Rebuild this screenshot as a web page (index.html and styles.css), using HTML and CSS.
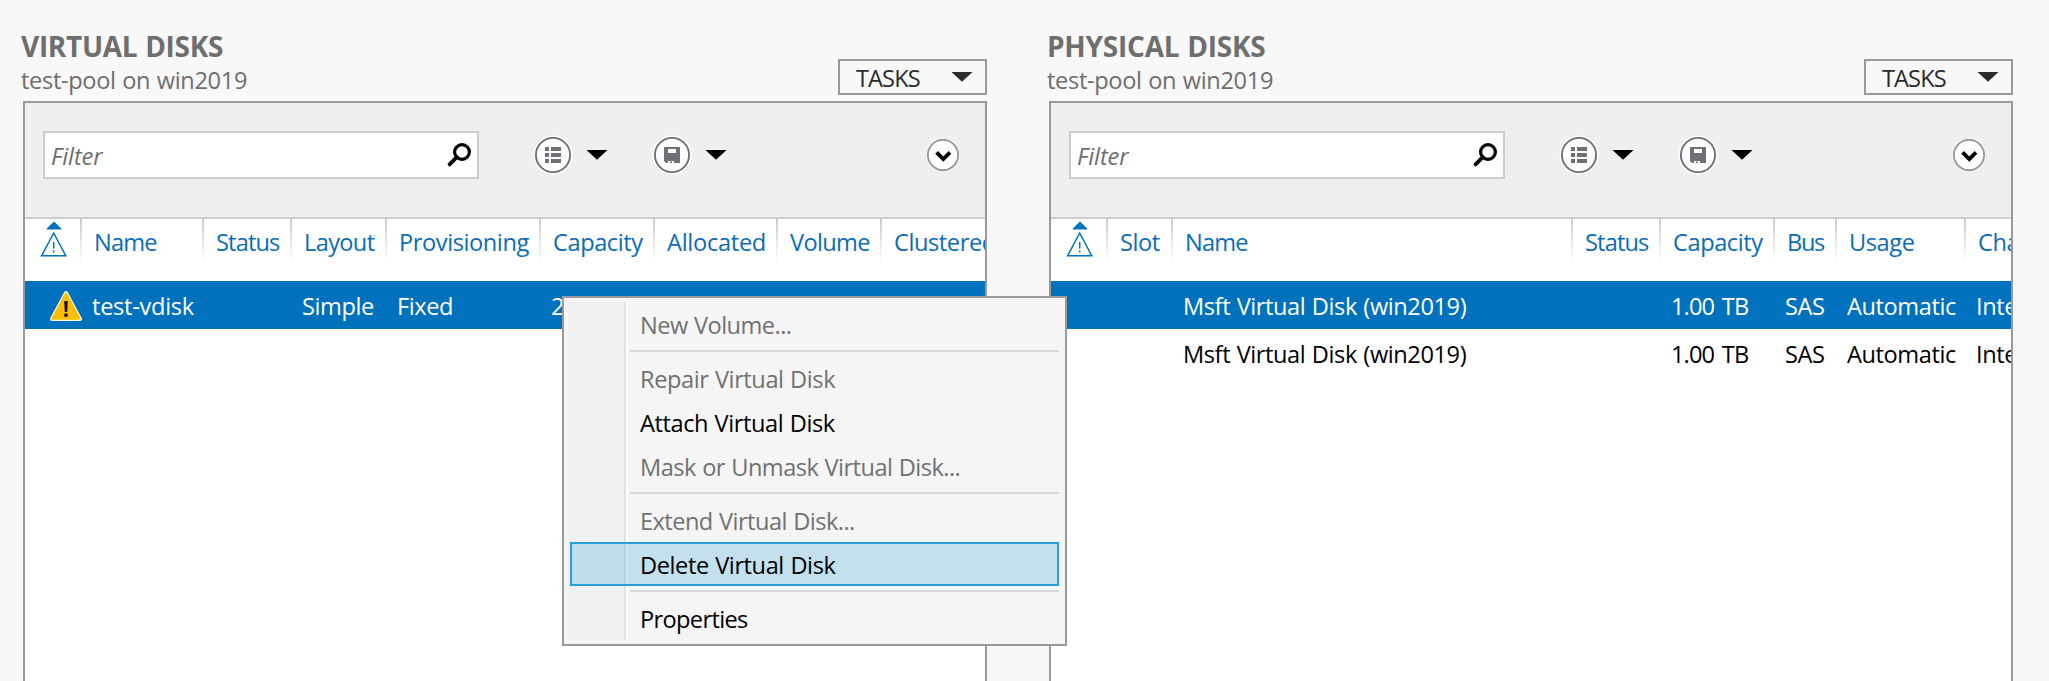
FILE: index.html
```html
<!DOCTYPE html>
<html lang="en">
<head>
<meta charset="utf-8">
<title>Storage Pools</title>
<link rel="stylesheet" href="styles.css">
</head>
<body>
<svg class="defs" width="0" height="0" aria-hidden="true">
  <symbol id="i-search" viewBox="0 0 26 26"><circle cx="16" cy="10" r="7.4" fill="none" stroke="#000" stroke-width="3.2"/><path d="M10.800 15.200 3.600 22.400" stroke="#000" stroke-width="3.800" stroke-linecap="round"/></symbol>
  <symbol id="i-list" viewBox="0 0 40 40"><circle cx="20" cy="20" r="19.500" fill="#fff"/><circle cx="20" cy="20" r="17.100" fill="#fff" stroke="#6d7176" stroke-width="1.900"/><path d="M12 12h4v4h-4zM18 12h10v4H18zM12 18h4v4h-4zM18 18h10v4H18zM12 24h4v4h-4zM18 24h10v4H18z" fill="#6d7176"/></symbol>
  <symbol id="i-save" viewBox="0 0 40 40"><circle cx="20" cy="20" r="19.500" fill="#fff"/><circle cx="20" cy="20" r="17.100" fill="#fff" stroke="#6d7176" stroke-width="1.900"/><path d="M12 12h16v16H14l-2-2z" fill="#6d7176"/><path d="M16 14h8v4h-8zM16 26h6v2h-6z" fill="#fff"/><path d="M18 26.500h2V28h-2z" fill="#6d7176"/></symbol>
  <symbol id="i-expand" viewBox="0 0 34 34"><circle cx="17" cy="17" r="15.100" fill="#fff" stroke="#959595" stroke-width="1.700"/><path d="M10.600 14.300 17.300 21 24 14.300" fill="none" stroke="#000" stroke-width="3.800"/></symbol>
  <symbol id="i-arrow" viewBox="0 0 22 10"><path d="M.5 0h21L11 9.800z" fill="currentColor"/></symbol>
  <symbol id="i-sort" viewBox="0 0 28 36"><path d="M14 .500 21.200 7.500V8.500H6.800V7.500z" fill="#0072be"/><path d="M13.700 12 25.800 34.800H1.600z" fill="none" stroke="#0072be" stroke-width="1.500"/><path d="M13.700 21v6.500M13.700 29.500v2" stroke="#0072be" stroke-width="1.500"/></symbol>
  <symbol id="i-warn" viewBox="0 0 32 30"><path d="M16 2 30 28H2z" fill="#ffbf00" stroke="#fff" stroke-width="3.800" stroke-linejoin="round"/><path d="M16 2.300 29.700 27.800H2.300z" fill="#ffbf00" stroke="#ffbf00" stroke-width="2" stroke-linejoin="round"/><path d="M14.200 10h3.600l-.6 11h-2.400z" fill="#111"/><circle cx="16" cy="24.200" r="1.900" fill="#111"/></symbol>
</svg>
<main class="page">
  <section class="tile">
    <header class="tile-head">
      <div>
        <h2 class="title title-virtual">VIRTUAL DISKS</h2>
        <p class="subtitle">test-pool on win2019</p>
      </div>
      <button class="tasks"><span>TASKS</span><svg class="arrow"><use href="#i-arrow"/></svg></button>
    </header>
    <div class="panel">
      <div class="toolbar">
        <div class="filter"><span>Filter</span><svg class="search"><use href="#i-search"/></svg></div>
        <svg class="round"><use href="#i-list"/></svg>
        <svg class="arrow"><use href="#i-arrow"/></svg>
        <svg class="round second"><use href="#i-save"/></svg>
        <svg class="arrow"><use href="#i-arrow"/></svg>
        <svg class="expand"><use href="#i-expand"/></svg>
      </div>
      <div class="grid virtual head">
        <div class="cell icon-cell"><svg class="sort"><use href="#i-sort"/></svg></div>
        <div class="cell tight">Name</div>
        <div class="cell tight">Status</div>
        <div class="cell mid">Layout</div>
        <div class="cell">Provisioning</div>
        <div class="cell">Capacity</div>
        <div class="cell loose">Allocated</div>
        <div class="cell mid">Volume</div>
        <div class="cell">Clustered</div>
      </div>
      <div class="grid virtual row selected">
        <div class="cell icon-cell"><svg class="warn"><use href="#i-warn"/></svg></div>
        <div class="cell loose">test-vdisk</div>
        <div class="cell"></div>
        <div class="cell">Simple</div>
        <div class="cell">Fixed</div>
        <div class="cell">20.0 GB</div>
        <div class="cell"></div>
        <div class="cell"></div>
        <div class="cell"></div>
      </div>
    </div>
  </section>
  <section class="tile">
    <header class="tile-head">
      <div>
        <h2 class="title">PHYSICAL DISKS</h2>
        <p class="subtitle">test-pool on win2019</p>
      </div>
      <button class="tasks"><span>TASKS</span><svg class="arrow"><use href="#i-arrow"/></svg></button>
    </header>
    <div class="panel">
      <div class="toolbar">
        <div class="filter"><span>Filter</span><svg class="search"><use href="#i-search"/></svg></div>
        <svg class="round"><use href="#i-list"/></svg>
        <svg class="arrow"><use href="#i-arrow"/></svg>
        <svg class="round second"><use href="#i-save"/></svg>
        <svg class="arrow"><use href="#i-arrow"/></svg>
        <svg class="expand"><use href="#i-expand"/></svg>
      </div>
      <div class="grid physical head">
        <div class="cell icon-cell"><svg class="sort"><use href="#i-sort"/></svg></div>
        <div class="cell">Slot</div>
        <div class="cell tight">Name</div>
        <div class="cell tight">Status</div>
        <div class="cell">Capacity</div>
        <div class="cell tighter">Bus</div>
        <div class="cell">Usage</div>
        <div class="cell">Chassis</div>
      </div>
      <div class="grid physical row selected">
        <div class="cell"></div>
        <div class="cell"></div>
        <div class="cell">Msft Virtual Disk (win2019)</div>
        <div class="cell"></div>
        <div class="cell size">1.00 TB</div>
        <div class="cell">SAS</div>
        <div class="cell">Automatic</div>
        <div class="cell">Integrated</div>
      </div>
      <div class="grid physical row">
        <div class="cell"></div>
        <div class="cell"></div>
        <div class="cell">Msft Virtual Disk (win2019)</div>
        <div class="cell"></div>
        <div class="cell size">1.00 TB</div>
        <div class="cell">SAS</div>
        <div class="cell">Automatic</div>
        <div class="cell">Integrated</div>
      </div>
    </div>
  </section>
</main>
<div class="menu">
  <div class="item disabled dots">New Volume...</div>
  <div class="rule"></div>
  <div class="item disabled">Repair Virtual Disk</div>
  <div class="item">Attach Virtual Disk</div>
  <div class="item disabled dots">Mask or Unmask Virtual Disk...</div>
  <div class="rule"></div>
  <div class="item disabled dots">Extend Virtual Disk...</div>
  <div class="item active">Delete Virtual Disk</div>
  <div class="rule"></div>
  <div class="item mid">Properties</div>
</div>
</body>
</html>
```
FILE: styles.css
```css
* { box-sizing: border-box; }

body {
  margin: 0;
  height: 681px;
  overflow: hidden;
  background: #f8f8f8;
  color: #000;
  font-family: "Open Sans", "Noto Sans", sans-serif;
  font-size: 23.6px;
  letter-spacing: -0.42px;
  word-spacing: 0.8px;
}

svg { display: block; flex: none; }
.defs { position: absolute; }
.tight { letter-spacing: -0.85px; }
.tighter { letter-spacing: -1.3px; }
.mid { letter-spacing: -0.65px; }
.loose { letter-spacing: -0.28px; }
.size { letter-spacing: -0.9px; word-spacing: 2.5px; }

.page {
  display: flex;
  gap: 62px;
  padding: 28px 0 0 23px;
  height: 681px;
}

.tile { display: flex; flex-direction: column; flex: none; width: 964px; }

.tile-head {
  display: flex;
  justify-content: space-between;
  align-items: flex-end;
  height: 73px;
  padding-bottom: 6px;
}
.tile-head > div { align-self: flex-start; margin-left: -2px; color: #6e6e6e; }

.title {
  margin: 0;
  font-size: 28px;
  font-weight: 700;
  line-height: 36px;
  letter-spacing: -0.22px;
}
.title-virtual { letter-spacing: -0.3px; }
.subtitle { margin: 1px 0 0; line-height: 31px; letter-spacing: -0.34px; }

.tasks {
  display: flex;
  justify-content: space-between;
  align-items: center;
  width: 149px;
  height: 36px;
  padding: 0 12px 0 16px;
  border: 2px solid #999;
  background: #f8f8f8;
  color: #2b2b2b;
  font: inherit;
  line-height: 32px;
  letter-spacing: -0.9px;
}
.tasks span { padding-top: 1px; }

.arrow { width: 22px; height: 10px; }

.panel {
  flex: 1;
  border: 2px solid #999;
  border-bottom: 0;
  background: #fff;
  overflow: hidden;
}

.toolbar {
  display: flex;
  align-items: center;
  height: 116px;
  padding: 0 25px 10px 18px;
  border-bottom: 2px solid #ccc;
  background: #efefef;
}
.filter {
  display: flex;
  justify-content: space-between;
  width: 436px;
  height: 48px;
  margin-right: 54px;
  padding: 0 5px 0 6px;
  border: 2px solid #ccc;
  background: #fff;
  color: #6e6e6e;
  font-style: italic;
  line-height: 47px;
  letter-spacing: -0.1px;
}
.search { width: 26px; height: 26px; margin-top: 9px; }
.round { width: 40px; height: 40px; }
.round + .arrow { margin-left: 13px; }
.second { margin-left: 44px; }
.expand { width: 34px; height: 34px; margin-left: auto; }

.grid { display: grid; height: 48px; white-space: nowrap; }
.virtual { grid-template-columns: 55px 122px 88px 95px 154px 114px 123px 104px 160px; }
.physical { grid-template-columns: 55px 65px 400px 88px 114px 62px 129px 120px; }

.head { height: 62px; color: #0b6cb8; line-height: 47px; }
.head .cell {
  padding-left: 14px;
  background: linear-gradient(#ccc, #fff) no-repeat 0 0 / 2px 44px;
}
.head .icon-cell { padding: 2px 0 0 15px; background: none; }
.sort { width: 28px; height: 36px; }

.row .cell { padding-left: 12px; line-height: 51px; }
.row .icon-cell { padding: 10px 0 0 25px; }
.warn { width: 32px; height: 30px; overflow: visible; }
.selected { background: #0071bd; color: #fff; }

/* Context menu floating over both tiles */
.menu {
  position: absolute;
  left: 562px;
  top: 296px;
  width: 505px;
  height: 350px;
  padding: 4px 6px;
  border: 2px solid #999;
  background:
    linear-gradient(90deg, #f0f0f0 56px, #e2e2e2 56px 58px, #fff 58px) no-repeat 4px 4px / 60px 338px,
    #f5f5f5;
}
.item {
  height: 44px;
  padding-left: 68px;
  border: 2px solid transparent;
  line-height: 43px;
}
.disabled { color: #717171; }
.dots { letter-spacing: -0.55px; }
.active { border-color: #26a0da; background: rgba(38, 160, 218, 0.24); }
.rule {
  height: 10px;
  margin-left: 60px;
  background: linear-gradient(#d7d7d7, #d7d7d7) no-repeat 0 4px / 100% 2px;
}
```
